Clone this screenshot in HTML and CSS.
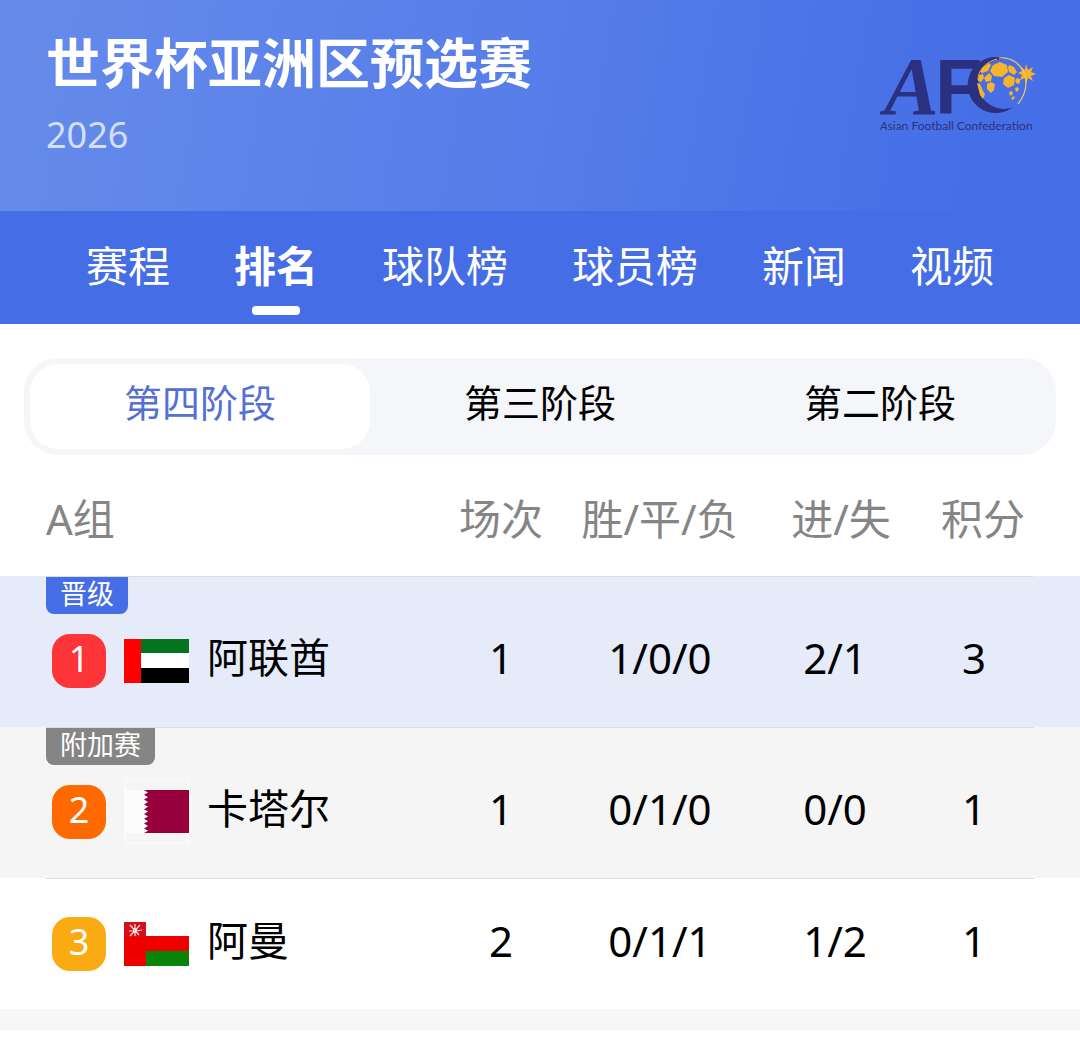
FILE: index.html
```
<!DOCTYPE html>
<html lang="zh-CN">
<head>
  <meta charset="UTF-8">
  <meta name="viewport" content="width=device-width, initial-scale=1.0">
  <title>世界杯亚洲区预选赛</title>
  <link rel="stylesheet" href="styles.css">
</head>
<body>

  <header class="banner">
    <div class="banner-text">
      <h1>世界杯亚洲区预选赛</h1>
      <p class="season">2026</p>
    </div>
    <svg class="logo" viewBox="0 0 160 86" role="img" aria-label="AFC">
      <text class="logo-a" x="4" y="64">A</text>
      <text class="logo-f" x="55" y="64">F</text>
      <path fill="#2b3180" d="M126 9A28 28 0 1 0 133 57A25 25 0 1 1 126 9Z"/>
      <g fill="#f6b42c">
        <path d="M113 15l7-3 7 3 1 7-6 5-8-1-4-5z"/>
        <path d="M103 17l6-4 2 2-3 6-6 2-2-1z"/>
        <path d="M129 15l5 2 3 5-3 3-5-3-1-4z"/>
        <path d="M124 28l5-3 6 3-1 7-6 3-5-4z"/>
        <path d="M109 23l3 3-1 5-5 1-2-4z"/>
        <path d="M99 25l4-1 1 4-3 4-3-1z"/>
        <path d="M107 34l4-2 4 2-1 6-3 3-4-4z"/>
        <path d="M97 33l3 1 3 7 2 3-2 5-3-4z"/>
        <path d="M137 28l3 1v4l-3 1-2-3zM135 38l3-1 1 3-3 2zM129 42l3-1 1 3-3 2zM133 46l2 1-2 3-2-1z"/>
        <path d="M146 14l2 6 5-3-2 5 5 2-5 2 2 5-5-3-2 6-1-6-5 2 2-5-4-2 4-2-2-5 5 4z"/>
      </g>
      <path fill="none" stroke="#f6c45c" stroke-width="1.2" d="M119 8C143 6 155 33 138 54"/>
      <path fill="none" stroke="#f6b42c" stroke-width="1" d="M98 30C98 20 106 12 117 9"/>
      <text class="logo-name" x="0" y="80"><tspan font-style="italic">A</tspan>sian Football Confederation</text>
    </svg>
  </header>

  <nav class="tabs">
    <a href="#">赛程</a>
    <a href="#" class="active">排名</a>
    <a href="#">球队榜</a>
    <a href="#">球员榜</a>
    <a href="#">新闻</a>
    <a href="#">视频</a>
  </nav>

  <main>
    <div class="stages">
      <button type="button" class="stage active">第四阶段</button>
      <button type="button" class="stage">第三阶段</button>
      <button type="button" class="stage">第二阶段</button>
    </div>

    <table class="ranking">
      <thead>
        <tr>
          <th class="team">A组</th>
          <th class="played">场次</th>
          <th class="record">胜/平/负</th>
          <th class="goals">进/失</th>
          <th class="points">积分</th>
        </tr>
      </thead>
      <tbody>
        <tr class="tagged qualified">
          <td class="team">
            <span class="tag">晋级</span>
            <div class="team-info">
              <span class="rank rank-1">1</span>
              <svg class="flag" viewBox="0 0 65 65" aria-hidden="true">
                <rect y="11" width="65" height="15" fill="#04741f"/>
                <rect y="25" width="65" height="15" fill="#fff"/>
                <rect y="40" width="65" height="15" fill="#000"/>
                <rect y="11" width="17" height="44" fill="#fe0000"/>
              </svg>
              <span class="name">阿联酋</span>
            </div>
          </td>
          <td>1</td>
          <td>1/0/0</td>
          <td>2/1</td>
          <td class="points">3</td>
        </tr>
        <tr class="tagged playoff">
          <td class="team">
            <span class="tag">附加赛</span>
            <div class="team-info">
              <span class="rank rank-2">2</span>
              <svg class="flag" viewBox="0 0 65 65" aria-hidden="true">
                <rect x="0.5" y="0.5" width="64" height="64" fill="none" stroke="#fafafa" stroke-width="2"/>
                <rect y="11" width="30" height="43" fill="#fcfcfc"/>
                <path fill="#96003c" d="M65 11H20l4 2.4-4 2.4 4 2.4-4 2.4 4 2.4-4 2.4 4 2.4-4 2.4 4 2.4-4 2.4 4 2.4-4 2.4 4 2.4-4 2.4 4 2.4-4 2.4 4 2.4-4 2.2H65z"/>
              </svg>
              <span class="name">卡塔尔</span>
            </div>
          </td>
          <td>1</td>
          <td>0/1/0</td>
          <td>0/0</td>
          <td class="points">1</td>
        </tr>
        <tr>
          <td class="team">
            <div class="team-info">
              <span class="rank rank-3">3</span>
              <svg class="flag" viewBox="0 0 65 65" aria-hidden="true">
                <rect y="11" width="65" height="15" fill="#fff"/>
                <rect y="25" width="65" height="15" fill="#ee0000"/>
                <rect y="40" width="65" height="15" fill="#088408"/>
                <rect y="11" width="22" height="44" fill="#ee0000"/>
                <rect y="11" width="22" height="15" fill="#d4101c"/>
                <path stroke="#fbdede" stroke-width="1.2" fill="none" d="M6 14l9 10M16 14L6 25M11 13v5M5 20h5M12 20l6-1M11 20v5"/>
                <circle cx="11" cy="19" r="2" fill="#fbdede"/>
              </svg>
              <span class="name">阿曼</span>
            </div>
          </td>
          <td>2</td>
          <td>0/1/1</td>
          <td>1/2</td>
          <td class="points">1</td>
        </tr>
      </tbody>
    </table>

    <div class="divider"></div>
  </main>

</body>
</html>
```
FILE: styles.css
```
/* Base */
* {
  margin: 0;
  padding: 0;
  box-sizing: border-box;
}

body {
  font-family: "Noto Sans", "Noto Sans CJK SC", sans-serif;
  background-color: #fff;
  color: #000;
}

/* Banner */
.banner {
  display: flex;
  justify-content: space-between;
  align-items: flex-start;
  height: 211px;
  padding: 31px 40px 0 46px;
  background: linear-gradient(100deg, #658bea 0%, #567de9 50%, #466ee6 90%);
}

.banner h1 {
  font-size: 54px;
  font-weight: 700;
  line-height: 64px;
  color: #fff;
}

.season {
  margin-top: 17px;
  font-size: 36px;
  line-height: 46px;
  color: #d3e0fb;
}

.logo {
  width: 160px;
  height: 86px;
  margin-top: 19px;
  overflow: visible;
}

.logo text {
  fill: #2b3180;
}

.logo-a {
  font: italic 700 82px "Liberation Serif", serif;
}

.logo-f {
  font: 700 78px "Liberation Sans", sans-serif;
}

.logo-name {
  font: 12px Lato, sans-serif;
}

/* Tabs */
.tabs {
  display: flex;
  justify-content: center;
  gap: 64px;
  height: 113px;
  padding-top: 23px;
  background-color: #456de6;
}

.tabs a {
  position: relative;
  font-size: 42px;
  line-height: 64px;
  color: #fff;
  text-decoration: none;
}

.tabs .active {
  font-weight: 700;
}

.tabs .active::after {
  content: "";
  position: absolute;
  top: 72px;
  left: calc(50% - 24px);
  width: 48px;
  height: 9px;
  border-radius: 4px;
  background-color: #fff;
}

/* Stage switch */
.stages {
  display: flex;
  margin: 34px 24px 0;
  padding: 6px;
  border-radius: 34px;
  background-color: #f5f6f9;
}

.stage {
  flex: 1;
  padding: 10px 0 19px;
  border: none;
  border-radius: 28px;
  background: none;
  font-family: inherit;
  font-size: 38px;
  line-height: 56px;
  color: #000;
  cursor: pointer;
}

.stage.active {
  background-color: #fff;
  color: #5470d0;
}

/* Ranking table */
.ranking {
  width: 100%;
  border-collapse: collapse;
  table-layout: fixed;
  font-size: 42px;
  line-height: 60px;
  text-align: center;
}

.ranking th {
  height: 121px;
  padding-top: 6px;
  font-weight: 400;
  color: #858585;
}

.ranking th.team {
  padding-left: 46px;
  text-align: left;
}

.played {
  width: 126px;
}

.record {
  width: 192px;
}

.goals {
  width: 158px;
}

.ranking th.goals {
  padding-left: 12px;
}

.points {
  width: 166px;
  padding-right: 46px;
}

.ranking th.points {
  padding-left: 18px;
}

/* The line above each row stops short of both page edges */
.ranking td {
  height: 131px;
  padding-bottom: 6px;
  background: linear-gradient(#dcdee3, #dcdee3) 0 0 / 100% 1px no-repeat;
}

.ranking td.team {
  position: relative;
  padding-bottom: 0;
  background-position: 46px 0;
}

.ranking td.points {
  background-size: calc(100% - 46px) 1px;
}

.ranking .tagged td {
  height: 151px;
  padding-top: 18px;
}

.ranking .qualified td {
  background-color: #e5ebf9;
}

.ranking .playoff td {
  background-color: #f5f5f5;
}

.tag {
  position: absolute;
  top: 1px;
  left: 46px;
  padding: 0 14px 4px;
  border-radius: 0 0 8px 8px;
  background-color: #858585;
  font-size: 27px;
  line-height: 33px;
  color: #fff;
}

.qualified .tag {
  background-color: #456de6;
}

.team-info {
  display: flex;
  align-items: center;
  gap: 18px;
  padding-left: 52px;
}

.name {
  padding-bottom: 8px;
  font-size: 41px;
}

.rank {
  width: 54px;
  height: 54px;
  border-radius: 18px;
  font-size: 36px;
  line-height: 50px;
  color: #fff;
}

.rank-1 {
  background-color: #fd3538;
}

.rank-2 {
  background-color: #ff6a00;
}

.rank-3 {
  background-color: #faab14;
}

.flag {
  width: 65px;
  height: 65px;
}

.divider {
  height: 21px;
  background-color: #f7f7f7;
}
```
